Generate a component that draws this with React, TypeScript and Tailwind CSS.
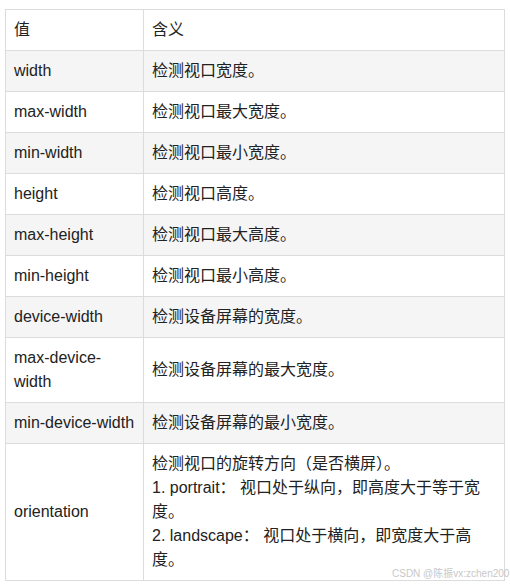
const rows: [string[], string[]][] = [
  [["width"], ["检测视口宽度。"]],
  [["max-width"], ["检测视口最大宽度。"]],
  [["min-width"], ["检测视口最小宽度。"]],
  [["height"], ["检测视口高度。"]],
  [["max-height"], ["检测视口最大高度。"]],
  [["min-height"], ["检测视口最小高度。"]],
  [["device-width"], ["检测设备屏幕的宽度。"]],
  [["max-device-", "width"], ["检测设备屏幕的最大宽度。"]],
  [["min-device-width"], ["检测设备屏幕的最小宽度。"]],
  [
    ["orientation"],
    [
      "检测视口的旋转方向（是否横屏）。",
      "1. portrait： 视口处于纵向，即高度大于等于宽",
      "度。",
      "2. landscape： 视口处于横向，即宽度大于高",
      "度。",
    ],
  ],
];

function Lines({ items }: { items: string[] }) {
  return (
    <>
      {items.map((t, i) => (
        <div key={i}>{t}</div>
      ))}
    </>
  );
}

export default function App() {
  return (
    <div className="relative w-[510px] h-[584px] overflow-hidden bg-white pt-[9px] pl-[5px] font-['Liberation_Sans','Noto_Sans_CJK_SC',sans-serif] text-[16px] leading-[24px] text-[#222]">
      <table className="w-[500px] border-collapse table-fixed">
        <colgroup>
          <col className="w-[138px]" />
          <col />
        </colgroup>
        <thead>
          <tr className="bg-white">
            <th className="border border-[#dcdcdc] px-2 py-2 text-left font-normal align-middle">值</th>
            <th className="border border-[#dcdcdc] px-2 py-2 text-left font-normal align-middle">含义</th>
          </tr>
        </thead>
        <tbody>
          {rows.map(([k, v], i) => (
            <tr key={i} className={i % 2 === 0 ? "bg-[#f5f5f5]" : "bg-white"}>
              <td className="border border-[#dcdcdc] px-2 py-2 align-middle">
                <Lines items={k} />
              </td>
              <td className="border border-[#dcdcdc] px-2 py-2 align-middle">
                <Lines items={v} />
              </td>
            </tr>
          ))}
        </tbody>
      </table>
      {/* watermark */}
      <div className="absolute left-[392px] top-[567px] text-[10px] leading-[14px] text-[#c8c8c8] whitespace-nowrap">
        CSDN @陈振vx:zchen2008
      </div>
    </div>
  );
}
